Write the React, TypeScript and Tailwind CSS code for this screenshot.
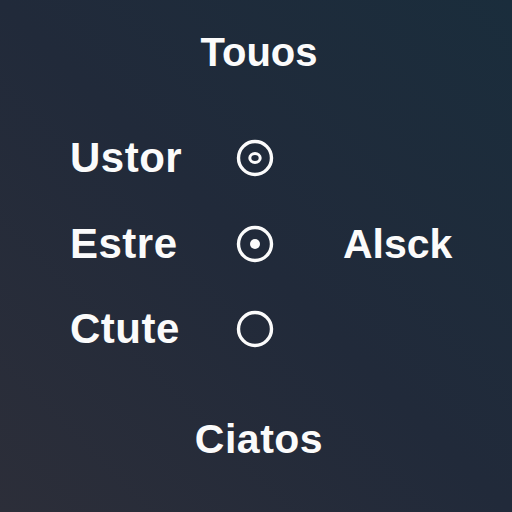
import React from "react";

type Mark = "ring" | "dot" | "empty";

const rows: { label: string; mark: Mark; side?: string }[] = [
  { label: "Ustor", mark: "ring" },
  { label: "Estre", mark: "dot", side: "Alsck" },
  { label: "Ctute", mark: "empty" },
];

function RadioMark({ mark }: { mark: Mark }) {
  return (
    <svg width="38" height="38" viewBox="0 0 38 38" className="shrink-0">
      <circle cx="19" cy="19" r="16.5" fill="none" stroke="#fbfbfb" strokeWidth="3.4" />
      {mark === "ring" && (
        <ellipse cx="19" cy="19" rx="5.2" ry="4.4" fill="none" stroke="#fbfbfb" strokeWidth="3" />
      )}
      {mark === "dot" && <circle cx="19" cy="19" r="5" fill="#fbfbfb" />}
    </svg>
  );
}

export default function App() {
  return (
    <div
      className="w-[512px] h-[512px] flex flex-col bg-gradient-to-bl from-[#1a2d3c] via-[#212a3a] to-[#2c2e39] text-[#fbfbfb] font-bold"
      style={{ fontFamily: '"Liberation Sans", Arial, sans-serif' }}
    >
      <div className="pt-[32px] text-center text-[40px] leading-[40px] pl-[6px]">Touos</div>

      <div className="mt-[66px] flex flex-col gap-[45.5px] pl-[70px]">
        {rows.map((r) => (
          <div key={r.label} className="flex items-center h-[40px]">
            <div className="w-[166px] text-[42px] leading-[40px] tracking-[0.5px]">{r.label}</div>
            <RadioMark mark={r.mark} />
            {r.side && <div className="ml-[69px] text-[41px] leading-[40px]">{r.side}</div>}
          </div>
        ))}
      </div>

      <div className="mt-[70px] text-center text-[41px] leading-[40px] pl-[6px] tracking-[0.5px]">Ciatos</div>
    </div>
  );
}
